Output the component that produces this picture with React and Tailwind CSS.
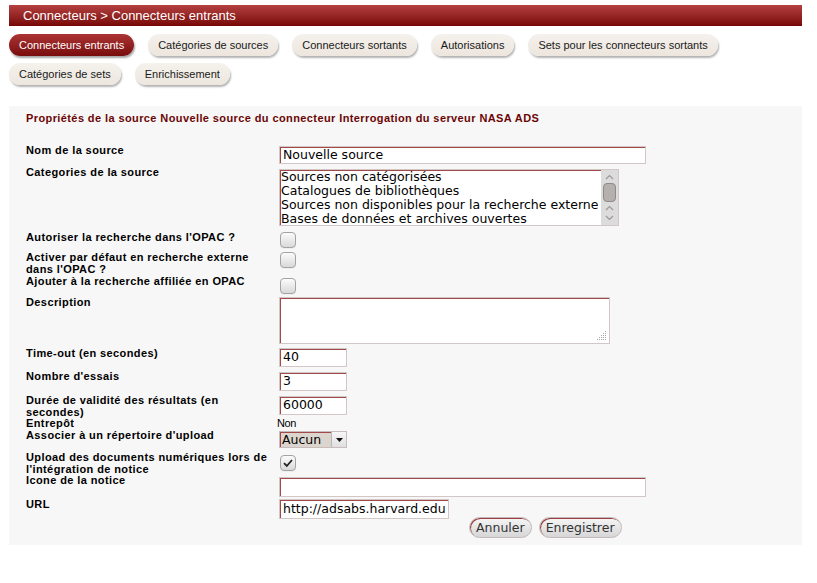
import React from "react";

const Checkbox = ({ checked }) => (
  <div className="w-[16px] h-[16px] rounded-[4px] border border-[#a3a3a3] bg-gradient-to-b from-[#fbfbfb] to-[#d9d9d9] shadow-[0_1px_0_#eeeeee] flex items-center justify-center">
    {checked && (
      <svg width="12" height="12" viewBox="0 0 12 12">
        <path d="M2 6.2 L4.8 9 L10 3" fill="none" stroke="#222" strokeWidth="1.8" />
      </svg>
    )}
  </div>
);

const inputCls =
  "bg-white border border-[#d2c6c6] shadow-[inset_1px_1px_0_#a04a4a] font-['DejaVu_Sans',sans-serif] text-[12.5px] text-black flex items-center pl-[3px] overflow-hidden whitespace-nowrap";

const Row = ({ label, h, children }) => (
  <div className={`flex items-start ${h}`}>
    <div className="w-[245px] shrink-0 text-[11px] leading-[12px] tracking-[0.4px] font-bold text-black">{label}</div>
    <div className="ml-[6px]">{children}</div>
  </div>
);

const Tab = ({ active, children }) => (
  <div
    className={
      active
        ? "h-[22px] px-[10px] rounded-full bg-gradient-to-b from-[#ac3434] to-[#780b0b] text-white text-[11px] leading-[22px] shadow-[1px_2px_2px_rgba(0,0,0,0.35)] whitespace-nowrap"
        : "h-[22px] px-[10px] rounded-full bg-gradient-to-b from-[#f5f1ec] to-[#ece6de] text-[#1a1a1a] text-[11px] leading-[22px] shadow-[1px_2px_2px_rgba(0,0,0,0.3)] whitespace-nowrap"
    }
  >
    {children}
  </div>
);

const Chevron = ({ up }) => (
  <svg width="9" height="6" viewBox="0 0 9 6">
    <path d={up ? "M1 5 L4.5 1.5 L8 5" : "M1 1 L4.5 4.5 L8 1"} fill="none" stroke="#9a9a9a" strokeWidth="1.2" />
  </svg>
);

export default function App() {
  return (
    <div className="w-[817px] h-[583px] bg-white font-['Liberation_Sans',Arial,sans-serif] overflow-hidden">
      <div className="pt-[5px] pl-[9px] w-[802px]">
        <div className="h-[21px] bg-gradient-to-b from-[#b54040] to-[#770505] text-white text-[13px] leading-[21px] pl-[14px]">
          Connecteurs &gt; Connecteurs entrants
        </div>
        <div className="mt-[8px] flex flex-wrap gap-x-[14px] gap-y-[7px]">
          <Tab active>Connecteurs entrants</Tab>
          <Tab>Catégories de sources</Tab>
          <Tab>Connecteurs sortants</Tab>
          <Tab>Autorisations</Tab>
          <Tab>Sets pour les connecteurs sortants</Tab>
          <Tab>Catégories de sets</Tab>
          <Tab>Enrichissement</Tab>
        </div>
        <div className="mt-[21px] h-[439px] bg-[#f7f7f7] pl-[17px] pt-[6px]">
          <div className="text-[11px] leading-[12px] tracking-[0.4px] font-bold text-[#6b0505]">
            Propriétés de la source Nouvelle source du connecteur Interrogation du serveur NASA ADS
          </div>
          <div className="mt-[20px]">
            <Row label="Nom de la source" h="h-[22px]">
              <div className={`${inputCls} ml-[2px] mt-[2px] w-[367px] h-[18px]`}>Nouvelle source</div>
            </Row>
            <Row label="Categories de la source" h="h-[65px]">
              <div className="ml-[2px] mt-[3px] w-[340px] h-[57px] bg-white border border-[#d2c6c6] shadow-[inset_1px_1px_0_#a04a4a] flex">
                <div className="flex-1 pl-[1px] font-['DejaVu_Sans',sans-serif] text-[12.5px] leading-[14px] text-black whitespace-nowrap overflow-hidden">
                  <div>Sources non catégorisées</div>
                  <div>Catalogues de bibliothèques</div>
                  <div>Sources non disponibles pour la recherche externe</div>
                  <div>Bases de données et archives ouvertes</div>
                </div>
                <div className="w-[17px] shrink-0 bg-[#dcdcdc] flex flex-col items-center pt-[4px]">
                  <Chevron up />
                  <div className="mt-[3px] w-[13px] h-[19px] rounded-[4px] bg-[#b5afad] border border-[#8f8a88]" />
                  <div className="mt-[3px]"><Chevron up /></div>
                  <div className="mt-[4px]"><Chevron /></div>
                </div>
              </div>
            </Row>
            <Row label="Autoriser la recherche dans l'OPAC ?" h="h-[20px]">
              <div className="ml-[3px] mt-[1px]"><Checkbox /></div>
            </Row>
            <Row label={<>Activer par défaut en recherche externe dans l'OPAC ?</>} h="h-[24px]">
              <div className="ml-[3px] mt-[1px]"><Checkbox /></div>
            </Row>
            <Row label="Ajouter à la recherche affiliée en OPAC" h="h-[21px]">
              <div className="ml-[3px] mt-[3px]"><Checkbox /></div>
            </Row>
            <Row label="Description" h="h-[51px]">
              <div className="relative ml-[2px] mt-[1px] w-[331px] h-[47px] bg-white border border-[#d2c6c6] shadow-[inset_1px_1px_0_#a04a4a]">
                <svg className="absolute right-[2px] bottom-[2px]" width="10" height="10" viewBox="0 0 10 10">
                  <g fill="#a8a8a8">
                    <rect x="8" y="0" width="1" height="1" />
                    <rect x="6" y="2" width="1" height="1" />
                    <rect x="8" y="2" width="1" height="1" />
                    <rect x="4" y="4" width="1" height="1" />
                    <rect x="6" y="4" width="1" height="1" />
                    <rect x="8" y="4" width="1" height="1" />
                    <rect x="2" y="6" width="1" height="1" />
                    <rect x="4" y="6" width="1" height="1" />
                    <rect x="6" y="6" width="1" height="1" />
                    <rect x="8" y="6" width="1" height="1" />
                    <rect x="0" y="8" width="1" height="1" />
                    <rect x="2" y="8" width="1" height="1" />
                    <rect x="4" y="8" width="1" height="1" />
                    <rect x="6" y="8" width="1" height="1" />
                    <rect x="8" y="8" width="1" height="1" />
                  </g>
                </svg>
              </div>
            </Row>
            <Row label="Time-out (en secondes)" h="h-[23px]">
              <div className={`${inputCls} ml-[2px] mt-[1px] w-[68px] h-[19px]`}>40</div>
            </Row>
            <Row label="Nombre d'essais" h="h-[24px]">
              <div className={`${inputCls} ml-[2px] mt-[2px] w-[68px] h-[19px]`}>3</div>
            </Row>
            <Row label="Durée de validité des résultats (en secondes)" h="h-[23px]">
              <div className={`${inputCls} ml-[2px] mt-[2px] w-[68px] h-[19px]`}>60000</div>
            </Row>
            <Row label="Entrepôt" h="h-[12px]">
              <div className="text-[11px] leading-[12px] tracking-[-0.4px] text-black">Non</div>
            </Row>
            <Row label="Associer à un répertoire d'upload" h="h-[22px]">
              <div className="ml-[2px] mt-[2px] w-[68px] h-[17px] flex border border-[#c8bcbc] shadow-[inset_1px_1px_0_#a04a4a] bg-[#dcd5ce]">
                <div className="flex-1 pl-[2px] font-['DejaVu_Sans',sans-serif] text-[12.5px] leading-[15px] text-black overflow-hidden">Aucun</div>
                <div className="w-[15px] shrink-0 bg-gradient-to-b from-[#f6f6f6] to-[#e0e0e0] border-l border-[#b8b8b8] flex items-center justify-center">
                  <svg width="7" height="4" viewBox="0 0 7 4">
                    <path d="M0 0 L7 0 L3.5 4 Z" fill="#111" />
                  </svg>
                </div>
              </div>
            </Row>
            <Row label="Upload des documents numériques lors de l'intégration de notice" h="h-[23px]">
              <div className="ml-[3px] mt-[4px]"><Checkbox checked /></div>
            </Row>
            <Row label="Icone de la notice" h="h-[24px]">
              <div className={`${inputCls} ml-[2px] mt-[3px] w-[367px] h-[20px]`}></div>
            </Row>
            <Row label="URL" h="h-[19px]">
              <div className={`${inputCls} ml-[2px] mt-[1px] w-[170px] h-[20px]`}>http://adsabs.harvard.edu</div>
            </Row>
            <div className="flex gap-[7px] pl-[443px]">
              <div className="h-[21px] px-[6px] rounded-full bg-gradient-to-b from-[#f6f6f6] to-[#d6d6d6] border border-[#c4b8b8] shadow-[inset_1px_1px_0_#9a4040] font-['DejaVu_Sans',sans-serif] text-[12.5px] leading-[19px] text-[#333]">
                Annuler
              </div>
              <div className="h-[21px] px-[6px] rounded-full bg-gradient-to-b from-[#f6f6f6] to-[#d6d6d6] border border-[#c4b8b8] shadow-[inset_1px_1px_0_#9a4040] font-['DejaVu_Sans',sans-serif] text-[12.5px] leading-[19px] text-[#333]">
                Enregistrer
              </div>
            </div>
          </div>
        </div>
      </div>
    </div>
  );
}
